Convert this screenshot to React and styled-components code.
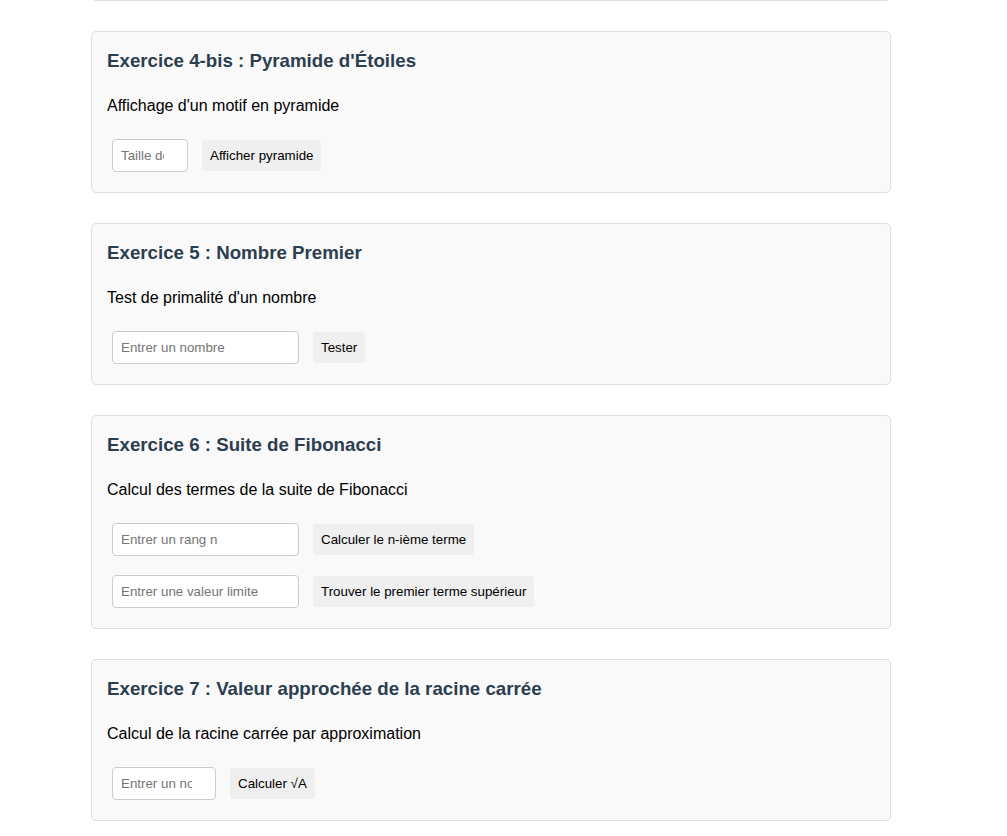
import styled, { createGlobalStyle } from "styled-components"

const GlobalStyle = createGlobalStyle`
	html, body {
		margin: 0;
		padding: 0;
		background: #fff;
	}
	body {
		font-family: "Liberation Sans", Arial, sans-serif;
		color: #000;
		overflow: hidden;
	}
`

const Page = styled.main`
	width: 800px;
	margin: 0 0 0 91px;
`

const CardTail = styled.div`
	height: 6px;
	margin-top: -5px;
	margin-bottom: 30px;
	box-sizing: border-box;
	background: #f9f9f9;
	border: 1px solid #ddd;
	border-top: none;
	border-radius: 0 0 5px 5px;
`

const Card = styled.section`
	box-sizing: border-box;
	background: #f9f9f9;
	border: 1px solid #ddd;
	border-radius: 5px;
	padding: 15px;
	margin-bottom: 30px;
`

const Title = styled.h3`
	margin: 3px 0 0;
	font-size: 18.72px;
	line-height: 22px;
	font-weight: bold;
	color: #2c3e50;
`

const Description = styled.p`
	margin: 25px 0 19px;
	font-size: 16px;
	line-height: 18px;
`

const Row = styled.div`
	display: flex;
	align-items: center;
	gap: 4px;
	& + & {
		margin-top: 9px;
	}
`

const Input = styled.input`
	box-sizing: border-box;
	width: ${(p) => p.$width}px;
	height: 33px;
	margin: 5px;
	padding: 8px;
	border: 1px solid #ccc;
	border-radius: 4px;
	background: #fff;
	font-family: "Liberation Sans", Arial, sans-serif;
	font-size: 13.33px;
	color: #000;
	&::placeholder {
		color: #757575;
	}
`

const Button = styled.button`
	height: 31px;
	margin: 5px;
	padding: 0 8px;
	border: none;
	border-radius: 4px;
	background: #efefef;
	font-family: "Liberation Sans", Arial, sans-serif;
	font-size: 13.33px;
	color: #000;
	cursor: pointer;
`

const exercises = [
	{
		title: "Exercice 4-bis : Pyramide d'Étoiles",
		text: "Affichage d'un motif en pyramide",
		rows: [{ placeholder: "Taille de la pyramide", width: 76, label: "Afficher pyramide" }],
	},
	{
		title: "Exercice 5 : Nombre Premier",
		text: "Test de primalité d'un nombre",
		rows: [{ placeholder: "Entrer un nombre", width: 187, label: "Tester" }],
	},
	{
		title: "Exercice 6 : Suite de Fibonacci",
		text: "Calcul des termes de la suite de Fibonacci",
		rows: [
			{ placeholder: "Entrer un rang n", width: 187, label: "Calculer le n-ième terme" },
			{ placeholder: "Entrer une valeur limite", width: 187, label: "Trouver le premier terme supérieur" },
		],
	},
	{
		title: "Exercice 7 : Valeur approchée de la racine carrée",
		text: "Calcul de la racine carrée par approximation",
		rows: [{ placeholder: "Entrer un nombre A", width: 104, label: "Calculer √A" }],
	},
]

export default function App() {
	return (
		<>
			<GlobalStyle />
			<Page>
				<CardTail />
				{exercises.map((ex) => (
					<Card key={ex.title}>
						<Title>{ex.title}</Title>
						<Description>{ex.text}</Description>
						{ex.rows.map((row) => (
							<Row key={row.label}>
								<Input type="number" $width={row.width} placeholder={row.placeholder} />
								<Button>{row.label}</Button>
							</Row>
						))}
					</Card>
				))}
			</Page>
		</>
	)
}
